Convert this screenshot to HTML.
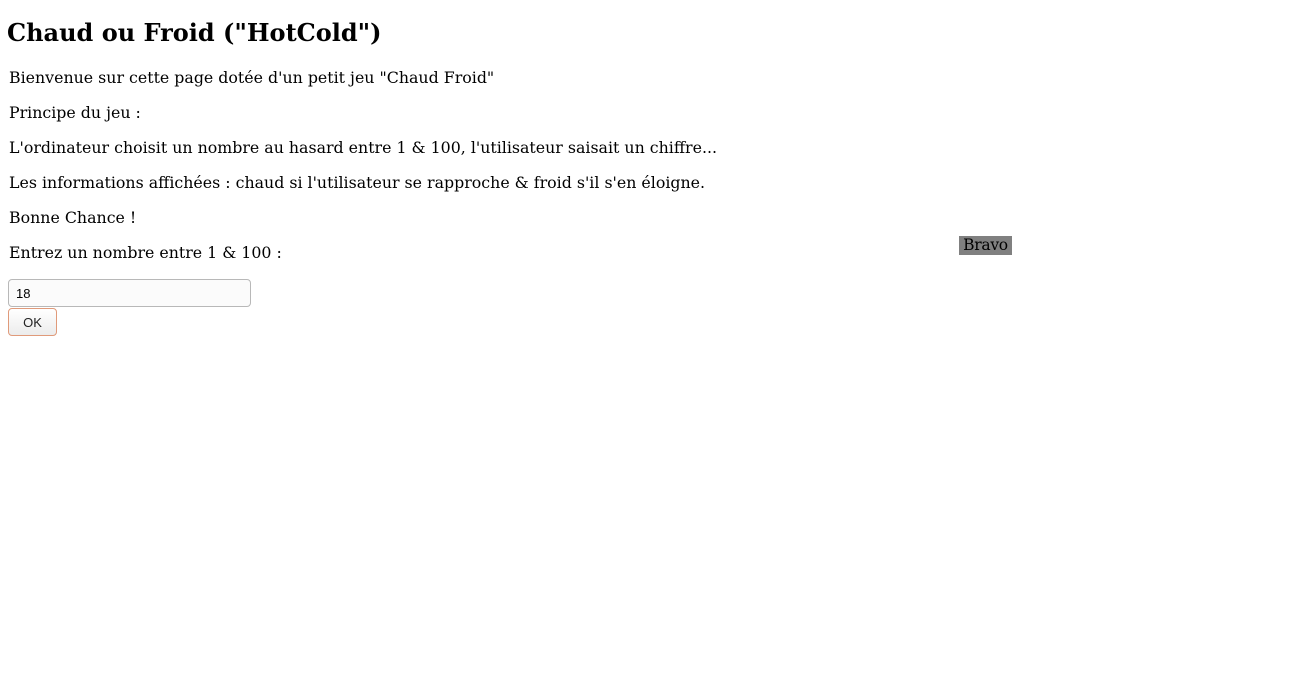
<!DOCTYPE html>
<html><head><meta charset="utf-8"><style>
body{margin:0;background:#fff;font-family:"DejaVu Serif",serif;color:#000}
h1{position:absolute;left:7px;top:17px;margin:0;font-size:24px;font-weight:bold;line-height:32px}
p{position:absolute;left:9px;margin:0;font-size:15.8px;line-height:20px;white-space:nowrap}
#in{position:absolute;left:8px;top:279px;border:1px solid #b8b8b8;border-radius:4px;background:#fbfbfb;font-family:"Liberation Sans",sans-serif;font-size:13px;line-height:27px;padding-left:7px;box-sizing:border-box;width:243px;height:28px}
#ok{position:absolute;left:8px;top:308px;width:49px;height:28px;box-sizing:border-box;border:1px solid #e09a7a;border-radius:4px;background:linear-gradient(#fff,#ececec);font-family:"Liberation Sans",sans-serif;font-size:13px;text-align:center;line-height:27px;color:#222}
#bravo{position:absolute;left:959px;top:236px;width:53px;height:19px;background:#808080;font-size:15.5px;line-height:19px;text-align:center;letter-spacing:-0.3px}
</style></head><body>
<h1>Chaud ou Froid ("HotCold")</h1>
<p style="top:68px">Bienvenue sur cette page dotée d'un petit jeu "Chaud Froid"</p>
<p style="top:103px">Principe du jeu :</p>
<p style="top:138px">L'ordinateur choisit un nombre au hasard entre 1 &amp; 100, l'utilisateur saisait un chiffre...</p>
<p style="top:173px">Les informations affichées : chaud si l'utilisateur se rapproche &amp; froid s'il s'en éloigne.</p>
<p style="top:208px">Bonne Chance !</p>
<p style="top:243px">Entrez un nombre entre 1 &amp; 100 :</p>
<div id="bravo">Bravo</div>
<div id="in">18</div>
<div id="ok">OK</div>
</body></html>
